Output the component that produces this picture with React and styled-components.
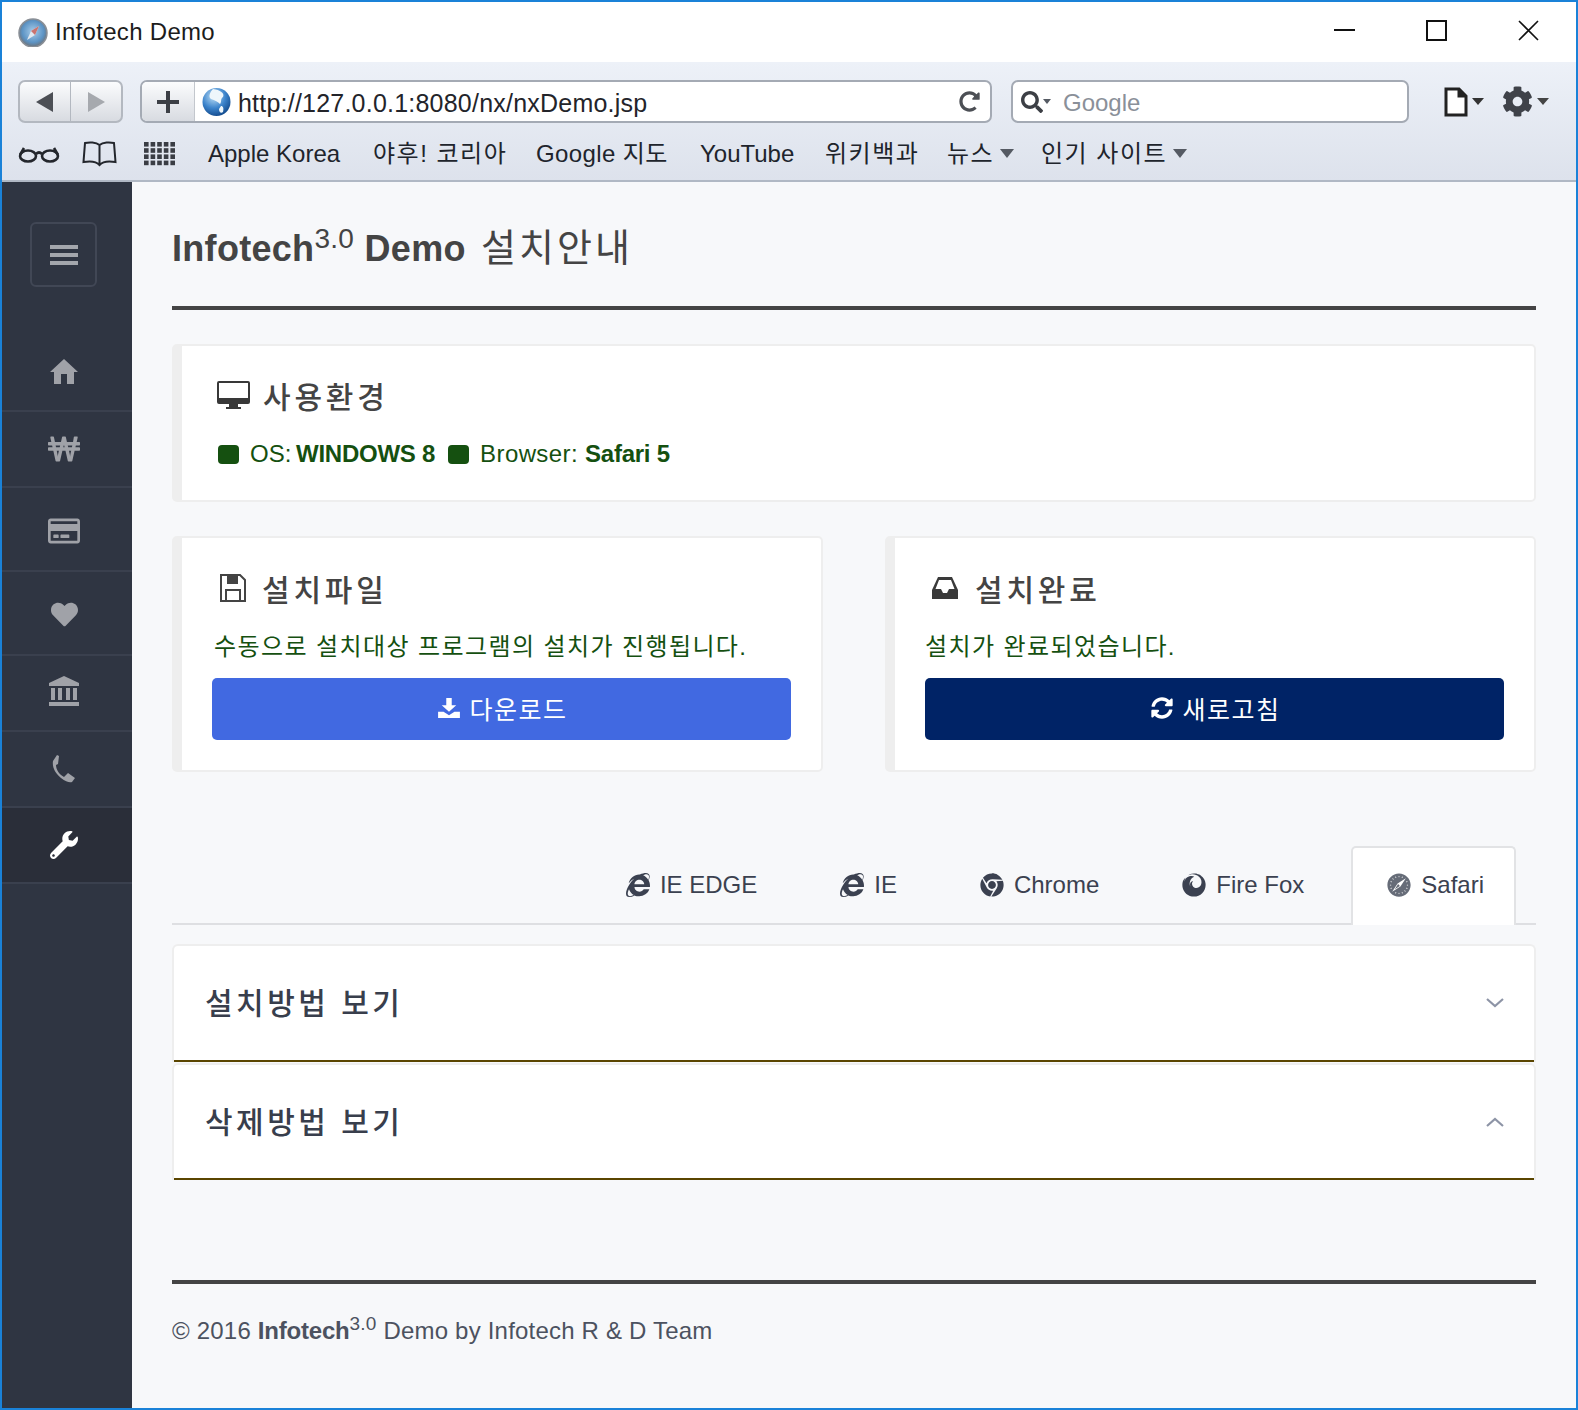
import React from "react";
import styled, { createGlobalStyle } from "styled-components";
import {
  FaWonSign,
  FaRegCreditCard,
  FaHeart,
  FaWrench,
  FaSyncAlt,
  FaInternetExplorer,
  FaChrome,
  FaFirefox,
  FaSafari,
  FaCog,
  FaSearch,
  FaRedoAlt,
} from "react-icons/fa";

const Global = createGlobalStyle`
  html, body { margin: 0; padding: 0; background: #f7f8fa; }
  * { box-sizing: border-box; }
  body { font-family: "Liberation Sans", "Noto Sans CJK KR", sans-serif; }
`;

const Window = styled.div`
  width: 1578px;
  height: 1410px;
  border: 2px solid #1a82d8;
  display: flex;
  flex-direction: column;
  overflow: hidden;
  background: #f7f8fa;
`;

const TitleBar = styled.div`
  height: 60px;
  background: #fff;
  display: flex;
  align-items: center;
  padding-left: 16px;
  flex-shrink: 0;
`;

const TitleText = styled.div`
  font-size: 24px;
  letter-spacing: 0.3px;
  color: #1c1c1c;
  margin-left: 7px;
  flex: 1;
`;

const WinButtons = styled.div`
  display: flex;
  align-items: center;
  gap: 71px;
  padding: 0 37px 4px 0;
`;

const Toolbar = styled.div`
  height: 120px;
  flex-shrink: 0;
  background: linear-gradient(#edf1f8, #dde2ec);
  border-bottom: 2px solid #b0b8c4;
  padding: 18px 0 0 16px;
`;

const ToolRow = styled.div`
  display: flex;
  align-items: center;
  height: 43px;
`;

const NavGroup = styled.div`
  width: 105px;
  height: 43px;
  display: flex;
  border: 2px solid #b3b8c0;
  border-radius: 7px;
  background: linear-gradient(#fbfcfd, #d8dbe1);
  overflow: hidden;
`;

const NavButton = styled.div`
  flex: 1;
  display: flex;
  align-items: center;
  justify-content: center;
  & + & {
    border-left: 1px solid #b3b8c0;
  }
`;

const UrlBar = styled.div`
  width: 852px;
  height: 43px;
  margin-left: 17px;
  display: flex;
  border: 2px solid #a4aab4;
  border-radius: 7px;
  background: #fff;
  overflow: hidden;
`;

const PlusButton = styled.div`
  width: 53px;
  flex-shrink: 0;
  display: flex;
  align-items: center;
  justify-content: center;
  background: linear-gradient(#fbfcfd, #d8dbe1);
  border-right: 1px solid #c3c7cd;
`;

const UrlText = styled.div`
  flex: 1;
  display: flex;
  align-items: center;
  gap: 7px;
  padding: 0 10px 0 7px;
  font-size: 25px;
  letter-spacing: 0.22px;
  color: #23242a;
`;

const UrlValue = styled.span`
  flex: 1;
  padding-top: 3px;
`;

const SearchBox = styled.div`
  width: 398px;
  height: 43px;
  margin-left: 19px;
  display: flex;
  align-items: center;
  padding-left: 8px;
  border: 2px solid #a4aab4;
  border-radius: 7px;
  background: #fff;
  font-size: 24px;
  color: #8a9099;
`;

const SearchHint = styled.span`
  margin-left: 12px;
  padding-top: 2px;
`;

const ToolIcons = styled.div`
  display: flex;
  align-items: center;
  margin-left: 35px;
  gap: 18px;
`;

const ToolIcon = styled.div`
  display: flex;
  align-items: center;
  gap: 4px;
`;

const BookmarkRow = styled.div`
  display: flex;
  align-items: center;
  height: 55px;
  padding-top: 6px;
`;

const Bookmark = styled.div`
  width: ${(p) => p.$w}px;
  height: 30px;
  line-height: 30px;
  flex-shrink: 0;
  display: flex;
  align-items: center;
  gap: 6px;
  font-size: 24px;
  letter-spacing: ${(p) => p.$ls || 0}px;
  color: #20242c;
  white-space: nowrap;
`;

const Caret = styled.span`
  display: inline-block;
  width: 0;
  height: 0;
  border-left: ${(p) => p.$s || 7}px solid transparent;
  border-right: ${(p) => p.$s || 7}px solid transparent;
  border-top: ${(p) => (p.$s || 7) * 1.3}px solid ${(p) => p.$c || "#555a63"};
`;

const Body = styled.div`
  flex: 1;
  display: flex;
  min-height: 0;
`;

const Sidebar = styled.nav`
  width: 130px;
  flex-shrink: 0;
  background: #2f3542;
  padding-top: 40px;
`;

const MenuBox = styled.div`
  width: 67px;
  height: 65px;
  margin: 0 0 49px 28px;
  border: 2px solid #414755;
  border-radius: 6px;
  display: flex;
  align-items: center;
  justify-content: center;
  color: #a3a6ac;
`;

const SideItem = styled.div`
  height: ${(p) => p.$h}px;
  border-bottom: 2px solid #3a404e;
  padding: ${(p) => p.$nudge || 0}px 6px 0 0;
  display: flex;
  align-items: center;
  justify-content: center;
  font-size: ${(p) => p.$size || 30}px;
  color: ${(p) => (p.$active ? "#fff" : "#a0a2a8")};
  background: ${(p) => (p.$active ? "#2a2e39" : "transparent")};
`;

const Main = styled.main`
  flex: 1;
  min-width: 0;
  padding: 36px 40px 0;
`;

const PageTitle = styled.h1`
  margin: 0;
  font-size: 36px;
  line-height: 60px;
  font-weight: 700;
  letter-spacing: 0.3px;
  color: #444;
  white-space: nowrap;
  sup {
    font-size: 28px;
    font-weight: 400;
    line-height: 0;
  }
`;

const TitleKo = styled.span`
  font-size: 38px;
  font-weight: 400;
  letter-spacing: 3px;
  margin-left: 5px;
`;

const Rule = styled.hr`
  margin: ${(p) => p.$mt}px 0 0;
  border: 0;
  height: 4px;
  background: #444;
`;

const Panel = styled.section`
  background: #fff;
  border: 2px solid #eee;
  border-left-width: 10px;
  border-radius: 5px;
  padding: ${(p) => p.$pt || 28}px 30px ${(p) => p.$pb || 30}px 30px;
  margin-top: ${(p) => p.$mt || 0}px;
`;

const PanelHead = styled.h2`
  margin: 0;
  height: 44px;
  display: flex;
  align-items: center;
  gap: ${(p) => p.$gap || 13}px;
  font-size: 30px;
  font-weight: 500;
  letter-spacing: 3.8px;
  color: #444;
  padding-left: ${(p) => p.$indent || 5}px;
`;

const InfoLine = styled.div`
  margin-top: 20px;
  height: 34px;
  display: flex;
  align-items: center;
  font-size: 24px;
  color: #155010;
  padding-left: 6px;
  white-space: pre;
  b {
    font-weight: 700;
    letter-spacing: -0.25px;
  }
`;

const InfoLabel = styled.span`
  letter-spacing: 0.4px;
`;

const OsValue = styled.b`
  margin-left: -2px;
`;

const Dot = styled.span`
  width: 21px;
  height: 19px;
  border-radius: 4px;
  background: #155010;
  margin-right: ${(p) => p.$mr}px;
  margin-left: ${(p) => p.$ml || 0}px;
`;

const Columns = styled.div`
  display: grid;
  grid-template-columns: 651px 651px;
  column-gap: 62px;
  margin-top: 34px;
`;

const Desc = styled.p`
  margin: 20px 0 14px ${(p) => p.$ml || 0}px;
  height: 34px;
  line-height: 34px;
  font-size: 24px;
  letter-spacing: 1.4px;
  color: #155010;
  white-space: nowrap;
`;

const ActionButton = styled.button`
  width: 100%;
  height: 62px;
  border: 0;
  border-radius: 5px;
  background: ${(p) => p.$bg};
  color: #fff;
  font-family: inherit;
  font-size: 25px;
  letter-spacing: 1.5px;
  display: flex;
  align-items: center;
  justify-content: center;
  gap: 9px;
  padding: 0 0 3px 3px;
`;

const TabBar = styled.div`
  margin-top: 74px;
  height: 79px;
  display: flex;
  justify-content: flex-end;
  padding-right: 20px;
  gap: 15px;
  border-bottom: 2px solid #dedfe2;
`;

const Tab = styled.div`
  height: 79px;
  padding: 0 30px 3px 34px;
  display: flex;
  align-items: center;
  gap: 10px;
  font-size: 24px;
  color: #3b4150;
  border: 2px solid ${(p) => (p.$active ? "#e2e3e5" : "transparent")};
  border-bottom: 0;
  border-radius: 5px 5px 0 0;
  background: ${(p) => (p.$active ? "#fff" : "transparent")};
`;

const Accordion = styled.div`
  margin-top: 19px;
  display: flex;
  flex-direction: column;
  gap: 1px;
`;

const AccordionItem = styled.div`
  height: 117px;
  background: #fff;
  border: 2px solid #eee;
  border-bottom: 0;
  border-radius: 6px 6px 0 0;
  box-shadow: inset 0 -2px 0 #5a4500;
  padding: 0 30px 6px 31px;
  display: flex;
  align-items: center;
  justify-content: space-between;
  font-size: 30px;
  letter-spacing: 3.5px;
  font-weight: 500;
  color: #383e4c;
  &:first-child {
    height: 118px;
  }
`;

const ChevronMark = styled.svg`
  margin-top: 4px;
`;

const FooterText = styled.div`
  margin-top: 30px;
  line-height: 34px;
  font-size: 24px;
  letter-spacing: 0.2px;
  color: #4c5260;
  white-space: nowrap;
  b {
    letter-spacing: -0.2px;
  }
  sup {
    font-size: 19px;
    line-height: 0;
  }
`;

const Compass = ({ size = 30 }) => (
  <svg width={size} height={size} viewBox="0 0 30 30">
    <defs>
      <radialGradient id="cmp" cx="50%" cy="45%" r="55%">
        <stop offset="0%" stopColor="#a8cdea" />
        <stop offset="70%" stopColor="#5c93c4" />
        <stop offset="100%" stopColor="#6d7278" />
      </radialGradient>
    </defs>
    <circle cx="15" cy="16" r="14" fill="url(#cmp)" stroke="#8a8f96" strokeWidth="1.5" />
    <path d="M21 9 L17 18 L9 23 L13 14 Z" fill="#dfe8f0" />
    <path d="M21 9 L17 18 L13 14 Z" fill="#c9736f" />
  </svg>
);

const Globe = () => (
  <svg width="29" height="30" viewBox="0 0 29 30">
    <defs>
      <radialGradient id="glb" cx="40%" cy="30%" r="70%">
        <stop offset="0%" stopColor="#bfe0f6" />
        <stop offset="60%" stopColor="#3c84cc" />
        <stop offset="100%" stopColor="#164f92" />
      </radialGradient>
    </defs>
    <circle cx="14.5" cy="15" r="14" fill="url(#glb)" />
    <path d="M11 2 C18 3 23 6 21 10 C18 12 20 15 18 17 C16 15 13 13 9 12 C6 10 8 5 11 2 Z M19 19 C21 19 22 21 21 25 C19 27 17 25 17 22 Z" fill="#eef6fb" />
  </svg>
);

const Glasses = () => (
  <svg width="42" height="18" viewBox="0 0 42 18" fill="none" stroke="#23262c" strokeWidth="2.6">
    <ellipse cx="10" cy="11" rx="8" ry="5.5" />
    <ellipse cx="32" cy="11" rx="8" ry="5.5" />
    <path d="M18 9 Q21 6 24 9 M2 10 L6 3 M40 10 L36 3" />
  </svg>
);

const Book = () => (
  <svg width="35" height="26" viewBox="0 0 35 26" fill="none" stroke="#23262c" strokeWidth="2">
    <path d="M17.5 4 C14 1 7 1 3 2 L1.5 21 C7 20 14 20 17.5 24 C21 20 28 20 33.5 21 L32 2 C28 1 21 1 17.5 4 Z M17.5 4 V24" />
  </svg>
);

const Grid = () => (
  <svg width="32" height="24" viewBox="0 0 32 24" fill="#3a3d44">
    {[0, 1, 2, 3].map((r) =>
      [0, 1, 2, 3, 4].map((c) => <rect key={`${r}-${c}`} x={c * 6.6} y={r * 6.2} width="4.6" height="4.6" />)
    )}
  </svg>
);

const PageIcon = () => (
  <svg width="24" height="30" viewBox="0 0 24 30" fill="#fff" stroke="#222" strokeWidth="3">
    <path d="M2 2 H15 L22 9 V28 H2 Z" />
    <path d="M15 2 V9 H22" fill="#222" />
  </svg>
);

const MenuIcon = () => (
  <svg width="28" height="20" viewBox="0 0 28 20" fill="#a3a6ac">
    <rect y="0" width="28" height="4" />
    <rect y="8" width="28" height="4" />
    <rect y="16" width="28" height="4" />
  </svg>
);

const HomeIcon = () => (
  <svg width="28" height="29" viewBox="0 0 28 29" fill="currentColor">
    <path d="M14 0 L28 13 H24 V25 H17 V15 H11 V25 H4 V13 H0 Z" />
  </svg>
);

const BankIcon = () => (
  <svg width="32" height="34" viewBox="0 0 32 34" fill="currentColor">
    <path d="M16 0 L31 7 V10 H1 V7 Z" />
    <path d="M3 12 H7 V24 H3 Z M10 12 H14 V24 H10 Z M18 12 H22 V24 H18 Z M25 12 H29 V24 H25 Z" />
    <path d="M1 26 H31 V30 H1 Z" />
  </svg>
);

const EarphoneIcon = () => (
  <svg width="24" height="28" viewBox="0 0 24 28" fill="currentColor">
    <path d="M5 0 L7 1 L6 9 L4 10 C4 15 8 20 12 22 L16 18 L23 23 L20 27 C18 28 14 27 9 23 C3 18 0 12 1 6 Z" />
  </svg>
);

const MonitorIcon = () => (
  <svg width="33" height="28" viewBox="0 0 33 28">
    <path d="M2 0 H31 Q33 0 33 2 V21 Q33 23 31 23 H21 V26 H24 V28 H9 V26 H12 V23 H2 Q0 23 0 21 V2 Q0 0 2 0 Z" fill="#383838" />
    <rect x="2" y="2" width="29" height="15" fill="#fff" />
  </svg>
);

const FloppyIcon = () => (
  <svg width="26" height="28" viewBox="0 0 26 28">
    <path d="M1 1 H20 L25 6 V27 H1 Z" fill="#fff" stroke="#444" strokeWidth="2" />
    <path d="M7 1 H18 V10 H7 Z" fill="#444" />
    <path d="M6 16 H20 V27 H6 Z" fill="#fff" stroke="#444" strokeWidth="2" />
  </svg>
);

const InboxIcon = () => (
  <svg width="28" height="24" viewBox="0 0 28 24">
    <path d="M7 1 H21 L27 14 V23 H1 V14 Z" fill="#3a3a3a" />
    <path d="M8 4 H20 L23.5 13 H18 L16 17 H12 L10 13 H4.5 Z" fill="#fff" />
  </svg>
);

const DownloadIcon = () => (
  <svg width="22" height="20" viewBox="0 0 24 22" fill="#fff">
    <path d="M9 0 H15 V8 H20 L12 15 L4 8 H9 Z" />
    <path d="M0 15 H6 L12 19 L18 15 H24 V22 H0 Z" />
  </svg>
);

const Chevron = ({ up }) => (
  <ChevronMark width="18" height="10" viewBox="0 0 18 10" fill="none" stroke="#8d94a6" strokeWidth="2.2">
    <path d={up ? "M1 9 L9 2 L17 9" : "M1 1 L9 8 L17 1"} />
  </ChevronMark>
);

const sideItems = [
  { icon: <HomeIcon />, h: 76 },
  { icon: <FaWonSign />, h: 76, size: 32 },
  { icon: <FaRegCreditCard />, h: 84, size: 32, nudge: 4 },
  { icon: <FaHeart />, h: 84, size: 27, nudge: 2 },
  { icon: <BankIcon />, h: 76 },
  { icon: <EarphoneIcon />, h: 76 },
  { icon: <FaWrench />, h: 76, size: 28, active: true },
];

const bookmarks = [
  { w: 64, node: <Glasses /> },
  { w: 62, node: <Book /> },
  { w: 64, node: <Grid /> },
  { w: 165, node: "Apple Korea" },
  { w: 163, node: "야후! 코리아", ls: 1.5 },
  { w: 164, node: "Google 지도", ls: 0.4 },
  { w: 125, node: "YouTube" },
  { w: 122, node: "위키백과", ls: 1.5 },
  { w: 94, node: "뉴스", ls: 1.5, caret: true },
  { w: 180, node: "인기 사이트", ls: 1.5, caret: true },
];

const tabs = [
  { icon: <FaInternetExplorer />, label: "IE EDGE" },
  { icon: <FaInternetExplorer />, label: "IE" },
  { icon: <FaChrome />, label: "Chrome" },
  { icon: <FaFirefox />, label: "Fire Fox" },
  { icon: <FaSafari color="#666c78" />, label: "Safari", active: true },
];

export default function App() {
  return (
    <>
      <Global />
      <Window>
        <TitleBar>
          <Compass />
          <TitleText>Infotech Demo</TitleText>
          <WinButtons>
            <svg width="21" height="21" viewBox="0 0 21 21" stroke="#111" strokeWidth="2">
              <path d="M0 10 H21" />
            </svg>
            <svg width="21" height="21" viewBox="0 0 21 21" fill="none" stroke="#111" strokeWidth="2">
              <rect x="1" y="1" width="19" height="19" />
            </svg>
            <svg width="21" height="21" viewBox="0 0 21 21" stroke="#111" strokeWidth="1.6">
              <path d="M1 1 L20 20 M20 1 L1 20" />
            </svg>
          </WinButtons>
        </TitleBar>

        <Toolbar>
          <ToolRow>
            <NavGroup>
              <NavButton>
                <svg width="18" height="20" viewBox="0 0 18 20" fill="#4c4f55">
                  <path d="M17 0 V20 L0 10 Z" />
                </svg>
              </NavButton>
              <NavButton>
                <svg width="18" height="20" viewBox="0 0 18 20" fill="#a6a9ae">
                  <path d="M1 0 V20 L18 10 Z" />
                </svg>
              </NavButton>
            </NavGroup>
            <UrlBar>
              <PlusButton>
                <svg width="22" height="22" viewBox="0 0 22 22" fill="#3c3f45">
                  <path d="M9 0 H13 V9 H22 V13 H13 V22 H9 V13 H0 V9 H9 Z" />
                </svg>
              </PlusButton>
              <UrlText>
                <Globe />
                <UrlValue>http://127.0.0.1:8080/nx/nxDemo.jsp</UrlValue>
                <FaRedoAlt size={21} color="#4c4f55" />
              </UrlText>
            </UrlBar>
            <SearchBox>
              <FaSearch size={22} color="#3c3f45" />
              <Caret $s={4} />
              <SearchHint>Google</SearchHint>
            </SearchBox>
            <ToolIcons>
              <ToolIcon>
                <PageIcon />
                <Caret $s={6} $c="#333" />
              </ToolIcon>
              <ToolIcon>
                <FaCog size={31} color="#3f4249" />
                <Caret $s={6} $c="#444" />
              </ToolIcon>
            </ToolIcons>
          </ToolRow>
          <BookmarkRow>
            {bookmarks.map((b, i) => (
              <Bookmark key={i} $w={b.w} $ls={b.ls}>
                {b.node}
                {b.caret && <Caret />}
              </Bookmark>
            ))}
          </BookmarkRow>
        </Toolbar>

        <Body>
          <Sidebar>
            <MenuBox>
              <MenuIcon />
            </MenuBox>
            {sideItems.map((s, i) => (
              <SideItem key={i} $h={s.h} $size={s.size} $active={s.active} $nudge={s.nudge}>
                {s.icon}
              </SideItem>
            ))}
          </Sidebar>

          <Main>
            <PageTitle>
              Infotech<sup>3.0</sup> Demo <TitleKo>설치안내</TitleKo>
            </PageTitle>
            <Rule $mt={27} />

            <Panel $mt={34} $pt={27} $pb={29}>
              <PanelHead>
                <MonitorIcon />
                사용환경
              </PanelHead>
              <InfoLine>
                <Dot $mr={11} />
                OS: <OsValue>WINDOWS 8</OsValue>
                <Dot $ml={13} $mr={11} />
                <InfoLabel>Browser: </InfoLabel>
                <b>Safari 5</b>
              </InfoLine>
            </Panel>

            <Columns>
              <Panel>
                <PanelHead $indent={8} $gap={16}>
                  <FloppyIcon />
                  설치파일
                </PanelHead>
                <Desc $ml={2}>수동으로 설치대상 프로그램의 설치가 진행됩니다.</Desc>
                <ActionButton $bg="#4169e1">
                  <DownloadIcon />
                  다운로드
                </ActionButton>
              </Panel>
              <Panel>
                <PanelHead $indent={6} $gap={16}>
                  <InboxIcon />
                  설치완료
                </PanelHead>
                <Desc>설치가 완료되었습니다.</Desc>
                <ActionButton $bg="#002366">
                  <FaSyncAlt size={22} />
                  새로고침
                </ActionButton>
              </Panel>
            </Columns>

            <TabBar>
              {tabs.map((t) => (
                <Tab key={t.label} $active={t.active}>
                  {t.icon}
                  {t.label}
                </Tab>
              ))}
            </TabBar>

            <Accordion>
              <AccordionItem>
                설치방법 보기
                <Chevron />
              </AccordionItem>
              <AccordionItem>
                삭제방법 보기
                <Chevron up />
              </AccordionItem>
            </Accordion>

            <Rule $mt={100} />
            <FooterText>
              © 2016 <b>Infotech</b>
              <sup>3.0</sup> Demo by Infotech R &amp; D Team
            </FooterText>
          </Main>
        </Body>
      </Window>
    </>
  );
}
